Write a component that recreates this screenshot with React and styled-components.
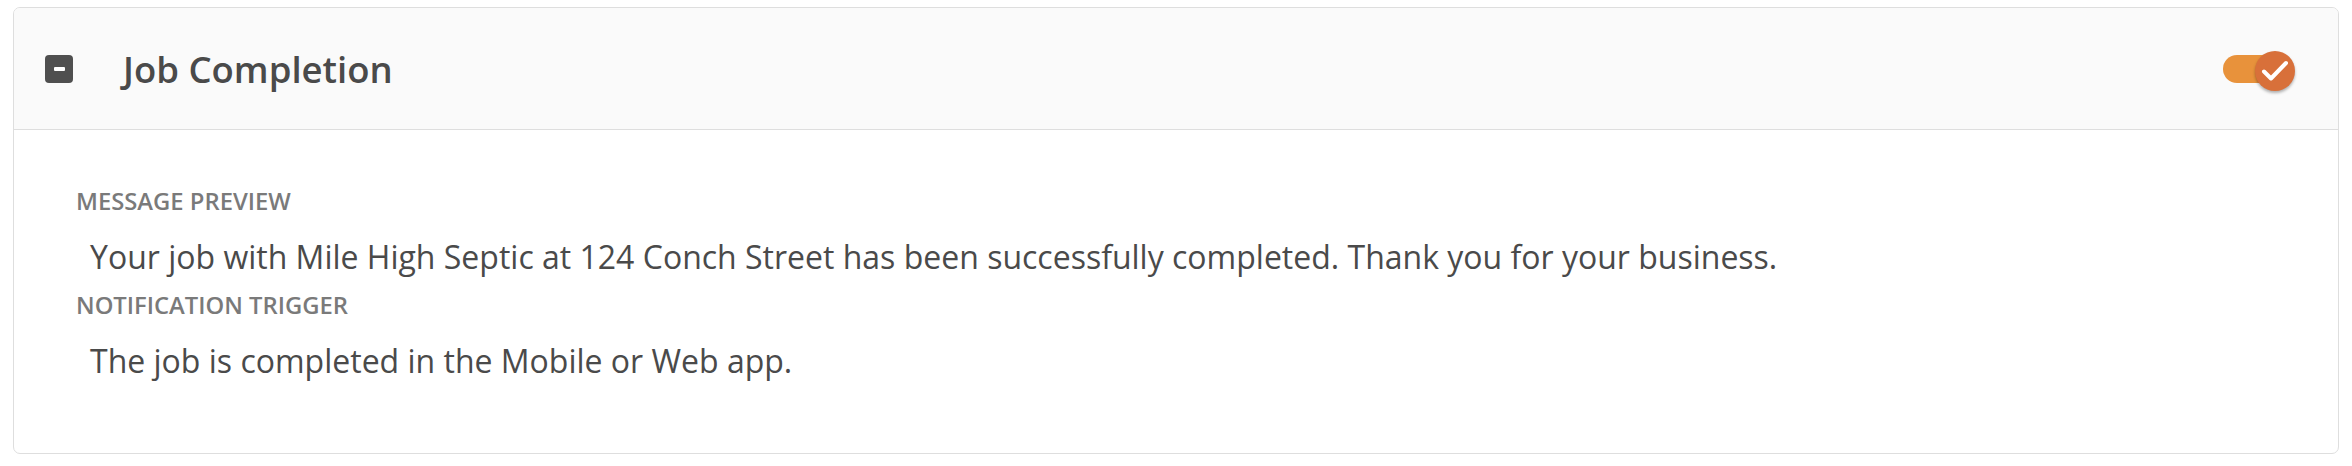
import styled, { createGlobalStyle } from 'styled-components';

const GlobalStyle = createGlobalStyle`
    body {
        margin: 0;
        background: #ffffff;
        font-family: "Open Sans", "Noto Sans", sans-serif;
        color: #4a4a4a;
    }
`;

const fields = [
    {
        label: 'Message Preview',
        value: 'Your job with Mile High Septic at 124 Conch Street has been successfully completed. Thank you for your business.',
    },
    {
        label: 'Notification Trigger',
        value: 'The job is completed in the Mobile or Web app.',
    },
];

const App = () => {
    return (
        <Page>
            <GlobalStyle />
            <Card>
                <Header>
                    <Collapse aria-label="Collapse">
                        <span />
                    </Collapse>
                    <Title>Job Completion</Title>
                    <Toggle role="switch" aria-checked="true">
                        <Track />
                        <Knob>
                            <svg width="28" height="22" viewBox="0 0 28 22">
                                <path d="M3 11.5 L10 18.5 L25 3" fill="none" stroke="#fff" strokeWidth="4" strokeLinecap="round" strokeLinejoin="round" />
                            </svg>
                        </Knob>
                    </Toggle>
                </Header>
                <Body>
                    {fields.map((f) => (
                        <Field key={f.label}>
                            <Label>{f.label}</Label>
                            <Value>{f.value}</Value>
                        </Field>
                    ))}
                </Body>
            </Card>
        </Page>
    );
};

const Page = styled.div`
    padding: 7px 13px 11px 13px;
`;

const Card = styled.div`
    border: 1px solid #dedede;
    border-radius: 7px;
    overflow: hidden;
    background: #ffffff;
`;

const Header = styled.div`
    display: flex;
    align-items: center;
    height: 122px;
    padding: 0 43px 0 31px;
    background: #fafafa;
    border-bottom: 1px solid #dedede;
    box-sizing: border-box;
`;

const Collapse = styled.button`
    width: 28px;
    height: 28px;
    padding: 0;
    border: none;
    border-radius: 4px;
    background: #4f4f4f;
    display: flex;
    align-items: center;
    justify-content: center;
    margin-right: 50px;
    cursor: pointer;

    span {
        width: 11px;
        height: 4px;
        border-radius: 1px;
        background: #ffffff;
    }
`;

const Title = styled.h2`
    flex: 1;
    margin: 0;
    font-size: 36.5px;
    font-weight: 600;
    color: #4a4a4a;
`;

const Toggle = styled.div`
    display: flex;
    align-items: center;
    cursor: pointer;
`;

const Track = styled.div`
    width: 58px;
    height: 28px;
    border-radius: 14px;
    background: #e8923b;
`;

const Knob = styled.div`
    width: 40px;
    height: 40px;
    margin-left: -26px;
    margin-top: 4px;
    border-radius: 50%;
    background: #d8703a;
    box-shadow: 0 2px 3px rgba(0, 0, 0, 0.3);
    display: flex;
    align-items: center;
    justify-content: center;
`;

const Body = styled.div`
    padding: 55px 76px 60px 62px;
`;

const Field = styled.div`
    display: flex;
    flex-direction: column;
`;

const Label = styled.div`
    font-size: 23.8px;
    line-height: 32px;
    font-weight: 600;
    text-transform: uppercase;
    color: #7a7a7a;
`;

const Value = styled.div`
    font-size: 32px;
    line-height: 44px;
    margin: 18px 0 10px 14px;
    color: #4a4a4a;
`;

export default App;
